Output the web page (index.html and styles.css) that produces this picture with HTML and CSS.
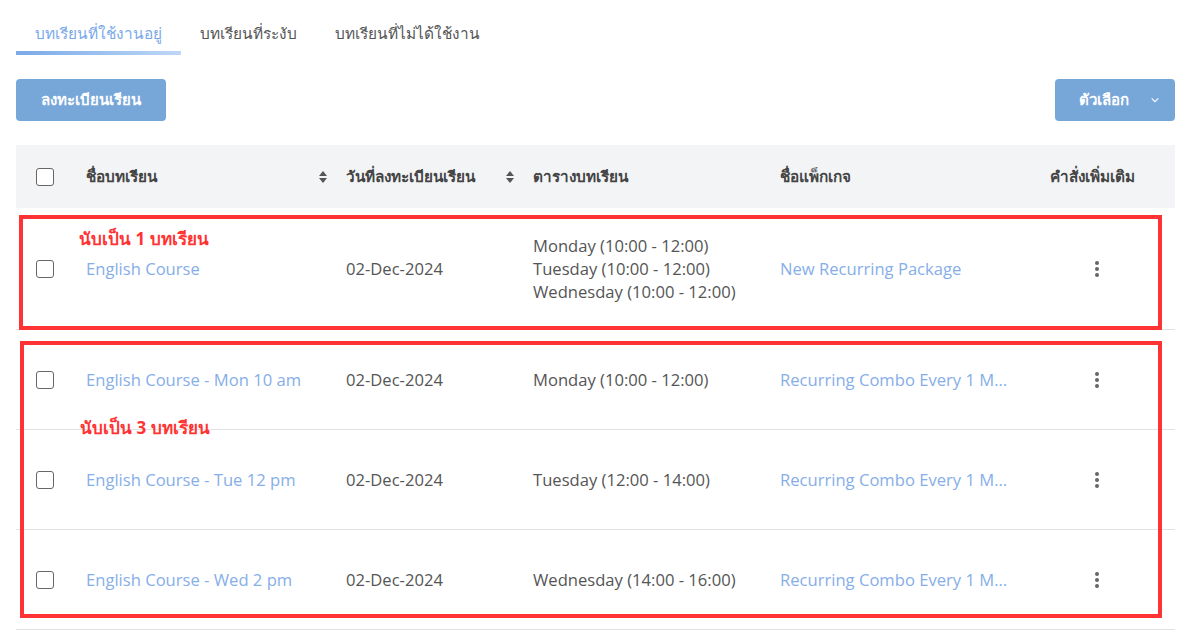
FILE: index.html
```html
<!DOCTYPE html>
<html lang="th">
<head>
    <meta charset="UTF-8">
    <title>บทเรียน</title>
    <link rel="stylesheet" href="styles.css">
</head>
<body>
    <div class="page">
        <div class="tabs">
            <a href="#" class="tab active">บทเรียนที่ใช้งานอยู่</a>
            <a href="#" class="tab">บทเรียนที่ระงับ</a>
            <a href="#" class="tab">บทเรียนที่ไม่ได้ใช้งาน</a>
        </div>

        <div class="toolbar">
            <button class="btn">ลงทะเบียนเรียน</button>
            <button class="btn btn-options">ตัวเลือก
                <svg width="12" height="8" viewBox="0 0 12 8"><path d="M1 1.5l5 5 5-5" fill="none" stroke="#fff" stroke-width="1.6"/></svg>
            </button>
        </div>

        <div class="table">
            <div class="row head">
                <div class="cell"><span class="check"></span></div>
                <div class="cell name">ชื่อบทเรียน <span class="sort"></span></div>
                <div class="cell date">วันที่ลงทะเบียนเรียน <span class="sort"></span></div>
                <div class="cell sched">ตารางบทเรียน</div>
                <div class="cell pkg">ชื่อแพ็กเกจ</div>
                <div class="cell act">คำสั่งเพิ่มเติม</div>
            </div>

            <div class="row tall">
                <div class="cell"><span class="check"></span></div>
                <div class="cell name"><a href="#" class="link">English Course</a></div>
                <div class="cell date">02-Dec-2024</div>
                <div class="cell sched">Monday (10:00 - 12:00)<br>Tuesday (10:00 - 12:00)<br>Wednesday (10:00 - 12:00)</div>
                <div class="cell pkg"><a href="#" class="link">New Recurring Package</a></div>
                <div class="cell act"><span class="dots"></span></div>
            </div>
            <div class="row">
                <div class="cell"><span class="check"></span></div>
                <div class="cell name"><a href="#" class="link">English Course - Mon 10 am</a></div>
                <div class="cell date">02-Dec-2024</div>
                <div class="cell sched">Monday (10:00 - 12:00)</div>
                <div class="cell pkg"><a href="#" class="link">Recurring Combo Every 1 M...</a></div>
                <div class="cell act"><span class="dots"></span></div>
            </div>
            <div class="row">
                <div class="cell"><span class="check"></span></div>
                <div class="cell name"><a href="#" class="link">English Course - Tue 12 pm</a></div>
                <div class="cell date">02-Dec-2024</div>
                <div class="cell sched">Tuesday (12:00 - 14:00)</div>
                <div class="cell pkg"><a href="#" class="link">Recurring Combo Every 1 M...</a></div>
                <div class="cell act"><span class="dots"></span></div>
            </div>
            <div class="row">
                <div class="cell"><span class="check"></span></div>
                <div class="cell name"><a href="#" class="link">English Course - Wed 2 pm</a></div>
                <div class="cell date">02-Dec-2024</div>
                <div class="cell sched">Wednesday (14:00 - 16:00)</div>
                <div class="cell pkg"><a href="#" class="link">Recurring Combo Every 1 M...</a></div>
                <div class="cell act"><span class="dots"></span></div>
            </div>
        </div>
    </div>

    <!-- annotations -->
    <div class="mark mark-one"><span class="mark-label">นับเป็น 1 บทเรียน</span></div>
    <div class="mark mark-three"><span class="mark-label">นับเป็น 3 บทเรียน</span></div>
</body>
</html>
```

FILE: styles.css
```css
* {
    margin: 0;
    padding: 0;
    box-sizing: border-box;
}

body {
    font-family: 'Open Sans', 'Noto Sans', Tahoma, sans-serif;
    color: #555;
    background: #fff;
    position: relative;
}

.page {
    padding: 0 5px 0 16px;
}

/* Tabs */
.tabs {
    display: flex;
    padding-top: 21px;
}

.tab {
    display: block;
    padding: 0 19px 5px;
    font-size: 15.4px;
    line-height: 25px;
    color: #555;
    text-decoration: none;
    border-bottom: 4px solid transparent;
}

.tab.active {
    color: #7aa9e8;
    border-image: linear-gradient(90deg, #7aaae8, #bed7f6) 1;
}

/* Toolbar */
.toolbar {
    display: flex;
    justify-content: space-between;
    margin-top: 24px;
}

.btn {
    height: 42px;
    padding: 0 25px;
    background: #77a7d9;
    color: #fff;
    border: none;
    border-radius: 4px;
    white-space: nowrap;
    font: bold 15px 'Open Sans', 'Noto Sans', Tahoma, sans-serif;
}

.btn-options {
    display: flex;
    align-items: center;
    gap: 22px;
    padding: 0 16px 0 24px;
    width: 120px;
}

/* Table */
.table {
    margin-top: 24px;
}

.row {
    display: grid;
    grid-template-columns: 54px 270px 187px 247px 266px 135px;
    height: 100px;
    border-bottom: 1px solid #e2e2e2;
    align-items: center;
    font-size: 16.6px;
}

.row.head {
    height: 63px;
    background: #f3f4f6;
    border-bottom: none;
    font-size: 15.3px;
    font-weight: bold;
    color: #444;
}

.row.tall {
    height: 122px;
}

.cell {
    padding-left: 6px;
    line-height: 23px;
    white-space: nowrap;
}

.cell:first-child {
    padding-left: 20px;
    display: flex;
}

.cell.name {
    padding-left: 16px;
}

.head .name,
.head .date {
    display: flex;
    justify-content: space-between;
    align-items: center;
    padding-right: 12px;
}

.cell.act {
    padding: 0 21px 0 0;
    display: flex;
    justify-content: center;
}

.head .cell.act {
    padding-left: 10px;
    justify-content: flex-start;
}

.check {
    width: 18px;
    height: 18px;
    border: 1.5px solid #666;
    border-radius: 3px;
    background: #fff;
}

.sort {
    width: 9px;
    height: 12px;
    position: relative;
}

.sort::before,
.sort::after {
    content: '';
    position: absolute;
    left: 0;
    border-left: 4.5px solid transparent;
    border-right: 4.5px solid transparent;
}

.sort::before {
    top: 0;
    border-bottom: 5px solid #555;
}

.sort::after {
    bottom: 0;
    border-top: 5px solid #555;
}

.link {
    color: #86aee8;
    text-decoration: none;
}

.dots {
    width: 4px;
    height: 4px;
    border-radius: 50%;
    background: #666;
    box-shadow: 0 -6px 0 #666, 0 6px 0 #666;
}

/* Red annotations */
.mark {
    position: absolute;
    border: 4px solid #ff3333;
}

.mark-one {
    left: 19px;
    top: 215px;
    width: 1143px;
    height: 115px;
}

.mark-three {
    left: 20px;
    top: 341px;
    width: 1142px;
    height: 277px;
}

.mark-label {
    position: absolute;
    left: 56px;
    color: #ff3333;
    font-weight: bold;
    font-size: 17px;
}

.mark-one .mark-label {
    top: 6px;
}

.mark-three .mark-label {
    top: 69px;
}
```
